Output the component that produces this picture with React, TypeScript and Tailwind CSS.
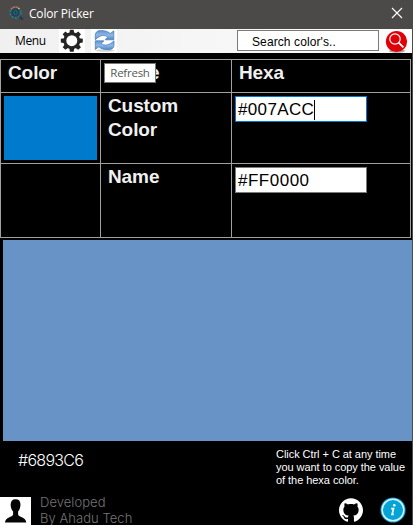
import type { ReactNode } from "react";

const teeth = [0, 45, 90, 135, 180, 225, 270, 315];

function AppLogo() {
  return (
    <svg width="15" height="15" viewBox="0 0 15 15" fill="none">
      <circle cx="6.5" cy="6.5" r="4" fill="#26384a" stroke="#294c60" strokeWidth="1.5" />
      <circle cx="6.5" cy="6.5" r="5.5" stroke="#168d96" strokeWidth="1.3" strokeDasharray="2 1.5" />
      <path d="M2 3.5A5.5 5.5 0 0 1 9 1.5" stroke="#e46238" strokeWidth="1.5" strokeDasharray="2 .8" />
      <path d="M9 2l1.5 1" stroke="#e0bc4c" strokeWidth="1.3" />
      <circle cx="6.5" cy="6.5" r="1.8" stroke="#147f95" />
      <path d="M10.5 10.5l3.2 3.2" stroke="#28384e" strokeWidth="2.4" />
    </svg>
  );
}

function Gear() {
  return (
    <svg width="26" height="24" viewBox="0 0 26 24" className="bg-white">
      <g transform="translate(12.8 11.7)" fill="#252525">
        {teeth.map((a) => (
          <path key={a} d="M-2.5-7L-1.9-11H1.9L2.5-7Z" transform={`rotate(${a})`} />
        ))}
        <circle r="7" fill="none" stroke="#252525" strokeWidth="3" />
      </g>
    </svg>
  );
}

function Refresh() {
  return (
    <svg width="26" height="24" viewBox="0 0 26 24" className="bg-white">
      <defs>
        <linearGradient id="arrow" x1="0" y1="0" x2="0" y2="1">
          <stop offset="0" stopColor="#5f94d0" />
          <stop offset=".5" stopColor="#8fb8e4" />
          <stop offset="1" stopColor="#4d88c8" />
        </linearGradient>
      </defs>
      <ellipse cx="14" cy="21.5" rx="9" ry="1.3" fill="#d0d3d6" />
      <g fill="url(#arrow)" stroke="#4478b7" strokeWidth=".7" strokeLinejoin="round">
        <path d="M4.3 10.8V6C4.3 3.4 6.5 1.500 9.500 1.500c4.200 0 6.900.7 9.800 3L22.800 1.800V10.800H14.200l2.500-2.700C14 5.700 9.500 5.400 4.300 10.800Z" />
        <path d="M23 11.800V16.300C23 19 20.700 20.700 17.700 20.700c-4.200 0-7.100-.6-10-2.900L4.300 20.500V11.800h8.600l-2.500 2.700C13.200 16.900 17.700 17 23 11.800Z" />
      </g>
    </svg>
  );
}

function SearchButton() {
  return (
    <svg width="24" height="24" viewBox="0 0 24 24" fill="none">
      <ellipse cx="12" cy="22" rx="8" ry="1.7" fill="#aaa" />
      <circle cx="11.500" cy="12.500" r="10.600" fill="#df0008" />
      <circle cx="10" cy="10" r="5.200" stroke="#fff" strokeWidth="1.200" />
      <path d="M13.700 13.700l4.700 4.700" stroke="#fff" strokeWidth="1.800" />
    </svg>
  );
}

function Person() {
  return (
    <svg width="31" height="28" viewBox="0 0 31 28" className="bg-white">
      <path
        d="M15.500 2.300c3.700 0 5.300 2.300 4.900 6.500-.2 2.500-1.200 4.500-2.300 5.700v3c.7 2.800 7.800 2.500 8.200 8H5c.4-5.500 7.500-5.200 8.100-8v-3c-1.200-1.200-2.200-3.200-2.400-5.700-.3-4.200 1.200-6.500 4.800-6.500Z"
        fill="#050505"
      />
    </svg>
  );
}

function GitHub() {
  return (
    <svg width="24" height="24" viewBox="0 0 24 24">
      <path
        fill="#fff"
        d="M12 .297c-6.630 0-12 5.373-12 12 0 5.303 3.438 9.800 8.205 11.385.6.113.820-.258.820-.577 0-.285-.010-1.040-.015-2.040-3.338.724-4.042-1.610-4.042-1.610C4.422 18.070 3.633 17.700 3.633 17.700c-1.087-.744.084-.729.084-.729 1.205.084 1.838 1.236 1.838 1.236 1.070 1.835 2.809 1.305 3.495.998.108-.776.417-1.305.760-1.605-2.665-.300-5.466-1.332-5.466-5.930 0-1.310.465-2.380 1.235-3.220-.135-.303-.540-1.523.105-3.176 0 0 1.005-.322 3.300 1.230.960-.267 1.980-.399 3-.405 1.020.006 2.040.138 3 .405 2.280-1.552 3.285-1.230 3.285-1.230.645 1.653.240 2.873.120 3.176.765.840 1.230 1.910 1.230 3.220 0 4.610-2.805 5.625-5.475 5.920.420.360.810 1.096.810 2.220 0 1.606-.015 2.896-.015 3.286 0 .315.210.690.825.570C20.565 22.092 24 17.592 24 12.297c0-6.627-5.373-12-12-12"
      />
    </svg>
  );
}

function Info() {
  return (
    <svg width="26" height="26" viewBox="0 0 26 26" fill="none">
      <circle cx="13" cy="13" r="12.600" fill="#109bce" />
      <circle cx="13" cy="13" r="10.800" fill="#05a4d6" stroke="#d5f5ff" strokeWidth="1.500" />
      <circle cx="14.300" cy="8.200" r="1.300" fill="#fff" />
      <path d="M11.200 11.600h2.300l-1.400 5.700h1.700" stroke="#fff" strokeWidth="1.700" />
    </svg>
  );
}

function Cell({ children }: { children?: ReactNode }) {
  return (
    <div className="border-r border-b border-[#a0a0a0] pl-[7px] text-[19px] leading-6 font-bold tracking-[-0.1px] text-[#f0f0f0]">
      {children}
    </div>
  );
}

export default function App() {
  return (
    <div className="flex h-[525px] w-[413px] flex-col overflow-hidden border-r border-[#4b4a48] bg-black font-['Liberation_Sans',Arial,sans-serif]">
      <header className="flex h-[29px] shrink-0 items-center bg-[#4b4a48] pl-[9px] text-white">
        <div className="pb-[3px]"><AppLogo /></div>
        <span className="ml-[5px] pb-px font-['Open_Sans',sans-serif] text-[12px] leading-4 tracking-[-0.2px]">Color Picker</span>
        <svg width="12" height="12" viewBox="0 0 12 12" className="mr-[9px] mb-[3px] ml-auto" stroke="white" strokeWidth="1.100">
          <path d="M1 1l10 10M11 1L1 11" />
        </svg>
      </header>
      <div className="flex h-6 shrink-0 bg-gradient-to-r from-[#f0f0f0] to-[#fcfcfc]">
        <span className="w-[59px] pt-1 pl-[15px] font-['Open_Sans',sans-serif] text-[12px] leading-4 tracking-[-0.35px] text-black">Menu</span>
        <Gear />
        <div className="ml-[6px]"><Refresh /></div>
        <div className="mt-px ml-[120px] h-[21px] w-[142px] border border-[#7a7a7a] bg-white pt-[3px] pl-[14px] text-[12px] leading-4 tracking-[0.1px] text-black">Search color's..</div>
        <div className="ml-[6px]"><SearchButton /></div>
      </div>
      <div className="mt-[6px] grid h-[179px] w-[411px] shrink-0 grid-cols-[100px_131px_179px] grid-rows-[33px_71px_74px] border-t border-l border-[#a0a0a0]">
        <Cell><div className="pt-px">Color</div></Cell>
        <Cell>
          <div className="relative pt-px">
            Name
            <span className="absolute top-[3px] -left-1 flex h-5 w-[52px] items-center justify-center border border-[#777] bg-white pb-px font-['Open_Sans',sans-serif] text-[11.5px] leading-4 font-normal tracking-[-0.25px] text-[#575757]">Refresh</span>
          </div>
        </Cell>
        <Cell><div className="pt-px">Hexa</div></Cell>
        <Cell><div className="mt-[3px] -ml-1 h-16 w-[93px] bg-[#007acc]" /></Cell>
        <Cell><div className="pt-px">Custom<br />Color</div></Cell>
        <Cell>
          <div className="mt-[3px] -ml-1 flex h-[26px] w-[132px] items-center border border-[#0078d7] bg-white pt-px pl-[2px] text-[17px] font-normal tracking-[0.35px] text-black">
            #007ACC<span className="h-5 w-px bg-black" />
          </div>
        </Cell>
        <Cell />
        <Cell><div className="pt-px">Name</div></Cell>
        <Cell>
          <div className="mt-[3px] -ml-1 flex h-[26px] w-[132px] items-center border border-[#7a7a7a] bg-white pt-px pl-[2px] text-[17px] font-normal tracking-[0.5px] text-black">#FF0000</div>
        </Cell>
      </div>
      <div className="mt-[2px] ml-[3px] h-[201px] shrink-0 bg-[#6893c6]" />
      <div className="flex h-14 shrink-0 justify-between text-white">
        <span className="pt-[9px] pl-[18px] font-['Inter',sans-serif] text-[16px] leading-5 font-light tracking-[-0.7px]">#6893C6</span>
        <p className="w-[136px] pt-[7px] text-[11px] leading-[13px] tracking-[-0.05px] whitespace-nowrap">Click Ctrl + C at any time<br />you want to copy the value<br />of the hexa color.</p>
      </div>
      <footer className="flex h-7 shrink-0">
        <Person />
        <p className="-mt-[3px] ml-[9px] font-['Inter',sans-serif] text-[13px] leading-4 font-light tracking-[0.05px] text-[#747474]">Developed<br />By Ahadu Tech</p>
        <div className="mr-[6px] ml-auto flex gap-[17px]">
          <div className="pt-px"><GitHub /></div>
          <Info />
        </div>
      </footer>
    </div>
  );
}
